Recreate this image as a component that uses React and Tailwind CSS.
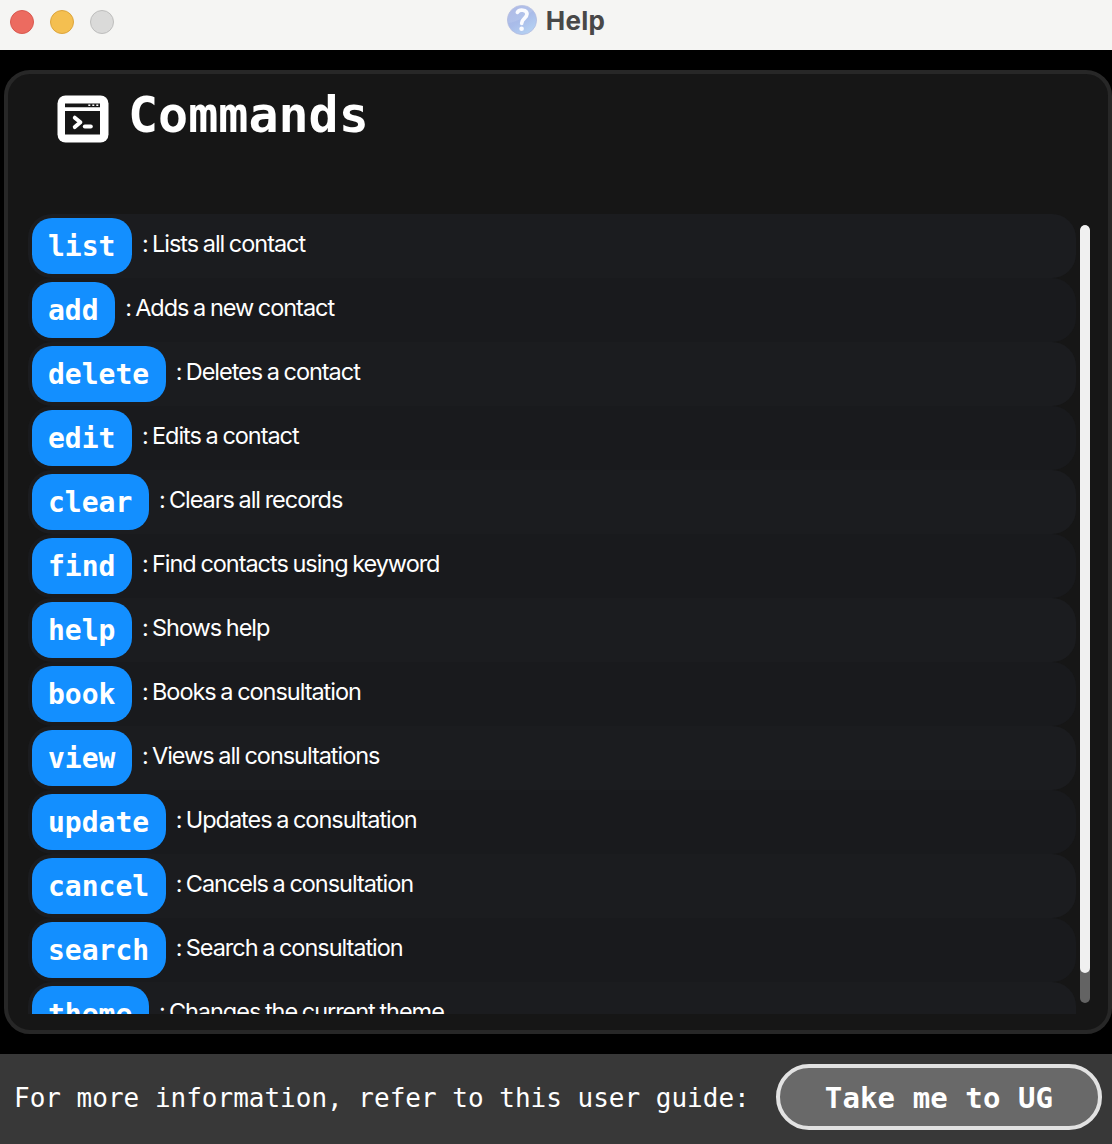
const COMMANDS = [
  ["list", "Lists all contact"],
  ["add", "Adds a new contact"],
  ["delete", "Deletes a contact"],
  ["edit", "Edits a contact"],
  ["clear", "Clears all records"],
  ["find", "Find contacts using keyword"],
  ["help", "Shows help"],
  ["book", "Books a consultation"],
  ["view", "Views all consultations"],
  ["update", "Updates a consultation"],
  ["cancel", "Cancels a consultation"],
  ["search", "Search a consultation"],
  ["theme", "Changes the current theme"],
];

function HelpIcon() {
  return (
    <svg className="h-[30px] w-[30px]" viewBox="0 0 30 30" fill="none">
      <defs>
        <linearGradient id="orb" x1="6" y1="2" x2="23" y2="28" gradientUnits="userSpaceOnUse">
          <stop stopColor="#a6b4e4" />
          <stop offset="0.5" stopColor="#a9bce9" />
          <stop offset="1" stopColor="#b5d2f3" />
        </linearGradient>
      </defs>
      <circle cx="15" cy="15" r="14.6" fill="url(#orb)" stroke="#b4bddf" strokeWidth="0.8" />
      <path d="M1.5 18C9 17 20 12 26 5.5A14 14 0 0 0 1.5 18Z" fill="#fff" opacity="0.1" />
      <path d="M10.4 7.4c1.8-3.4 9.6-3 9.6 1.7 0 4.2-5.3 4.6-5.3 9.2" stroke="#fafbff" strokeWidth="3.7" strokeLinecap="round" strokeLinejoin="round" />
      <circle cx="14.6" cy="23.7" r="2.3" fill="#fafbff" />
    </svg>
  );
}

function TerminalIcon() {
  return (
    <svg className="h-[48px] w-[52px]" viewBox="0 0 52 48" fill="none">
      <rect x="0.5" y="0.5" width="51" height="47" rx="8" fill="#fff" />
      <path d="M8 8.5h35v3.7H8zM8 16h35v23.5H8z" fill="#161616" />
      <path d="M31.3 10.3h2M35.3 10.3h2M39.3 10.3h2" stroke="#fff" strokeWidth="1.6" />
      <path d="M17.8 22.7l5.6 4.6-5.6 4.8" stroke="#fff" strokeWidth="4" strokeLinecap="round" strokeLinejoin="round" />
      <path d="M27.8 31.6h6" stroke="#fff" strokeWidth="4" strokeLinecap="round" />
    </svg>
  );
}

export default function App() {
  return (
    <div className="flex h-[1144px] w-[1112px] flex-col overflow-hidden bg-black font-['DejaVu_Sans_Mono',monospace] text-white">
      <header className="grid h-[50px] shrink-0 grid-cols-[1fr_auto_1fr] items-start bg-[#f5f5f3]">
        <div className="flex gap-4 pt-[10px] pl-[10px]">
          <span className="h-6 w-6 rounded-full border border-[#d9594f] bg-[#ec6b60]" />
          <span className="h-6 w-6 rounded-full border border-[#dda53c] bg-[#f4bf50]" />
          <span className="h-6 w-6 rounded-full border border-[#bebebd] bg-[#dadad9]" />
        </div>
        <div className="flex items-center gap-[9px] pt-[5px]">
          <HelpIcon />
          <h1 className="h-[30px] font-['Inter',sans-serif] text-[26px] leading-[32px] font-bold tracking-[0.3px] text-[#484848]">Help</h1>
        </div>
        <div />
      </header>

      <main className="mt-5 ml-1 flex h-[964px] shrink-0 flex-col rounded-[26px] border-4 border-[#272727] bg-[#161616]">
        <div className="flex h-[140px] shrink-0 items-start pl-[49px]">
          <div className="mt-[21px]"><TerminalIcon /></div>
          <h2 className="mt-[11px] ml-[19px] text-[50px] leading-[60px] font-bold">Commands</h2>
        </div>
        <div className="flex h-[800px] items-start">
          <ul className="ml-5 h-[800px] w-[1048px] overflow-hidden">
            {COMMANDS.map(([name, text]) => (
              <li key={name} className="flex h-16 items-start rounded-3xl bg-[#191a1d] pt-1 pl-1 odd:bg-[#1b1c1f]">
                <code className="h-14 rounded-[20px] bg-[#138fff] pt-px pr-[16.6px] pl-4 font-['DejaVu_Sans_Mono',monospace] text-[28px] leading-[56px] font-bold">{name}</code>
                <p className="ml-[10px] flex font-['Inter',sans-serif] text-[23.5px] leading-[52px] font-[380] tracking-[-1.04px] [word-spacing:-0.9px] whitespace-nowrap">
                  <span className="w-[10px]">:</span>
                  <span>{text}</span>
                </p>
              </li>
            ))}
          </ul>
          <div className="mt-[11px] ml-1 h-[778px] w-[10px] overflow-hidden rounded-full bg-[#636363]">
            <div className="h-[748px] rounded-full bg-[#f0f0f0]" />
          </div>
        </div>
      </main>

      <footer className="mt-5 flex h-[90px] shrink-0 items-start bg-[#383838] pt-[10px] pr-[10px] pl-[14px]">
        <p className="pt-px text-[26px] leading-[66px] whitespace-nowrap">For more information, refer to this user guide:</p>
        <button className="ml-auto h-[66px] w-[326px] rounded-full border-4 border-[#e2e2e2] bg-[#696969] pt-px text-[29px] leading-[58px] font-bold tracking-[0.1px]">
          Take me to UG
        </button>
      </footer>
    </div>
  );
}
